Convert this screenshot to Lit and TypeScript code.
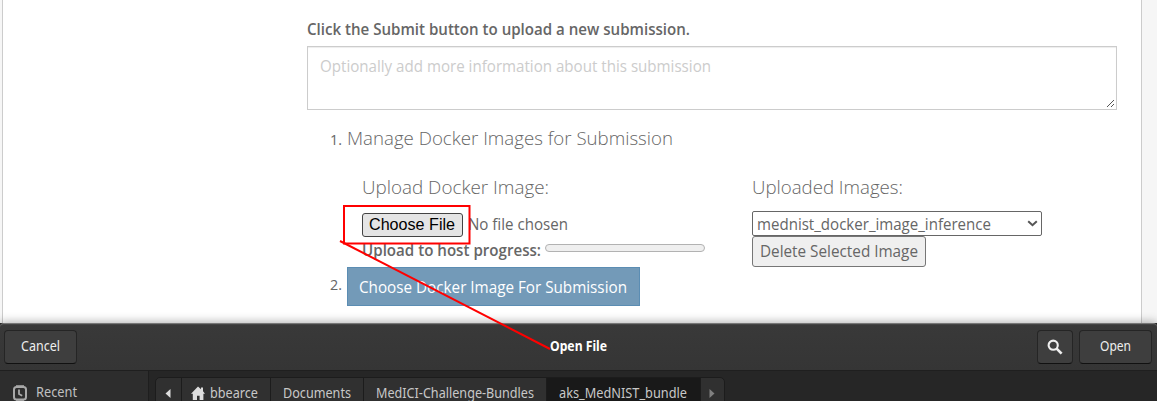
import { LitElement, html, css, svg } from 'lit';
import { customElement, property } from 'lit/decorators.js';

/** Single line of text, condensed or widened to a fixed advance width. */
@customElement('fit-text')
class FitText extends LitElement {
  @property({ type: Number }) w = 0;
  static styles = css`
    :host { display: inline-block; white-space: nowrap; flex: none; }
    span { display: inline-block; transform-origin: 0 50%; }
  `;
  render() { return html`<span><slot></slot></span>`; }
  updated() {
    const s = this.renderRoot.querySelector('span') as HTMLElement;
    this.style.width = 'auto';
    s.style.transform = 'none';
    const n = s.getBoundingClientRect().width;
    this.style.width = this.w + 'px';
    if (n) s.style.transform = `scaleX(${this.w / n})`;
  }
}

@customElement('submission-form')
class SubmissionForm extends LitElement {
  static styles = css`
    :host { display: block; height: 323px; overflow: hidden; background: #f6f6f6; font: 15.5px/20px "Open Sans", "Noto Sans", sans-serif; color: #666; }
    * { box-sizing: border-box; }
    .panel { height: 323px; margin: 0 15px 0 2px; border: solid #ccc; border-width: 0 1px; background: #fff; padding: 19px 24px 0 304px; }
    .label { height: 27px; font-weight: 600; }
    .label fit-text { vertical-align: top; }
    .area { height: 64px; border: 1px solid #ccc; box-shadow: inset 0 1px 1px rgba(0,0,0,.075); padding: 9px 12px 11px; color: #ccc; display: flex; justify-content: space-between; }
    .grip { width: 8px; height: 8px; align-self: flex-end; margin: 0 -11px -10px 0; flex: none; }
    .item { display: grid; grid-template-columns: 40px 1fr; }
    .num { padding-left: 23px; font-size: 15px; }
    .one { height: 157px; padding-top: 17px; align-items: start; }
    .light { font-weight: 300; font-size: 18.5px; line-height: 22px; }
    .cols { display: grid; grid-template-columns: 390px 1fr; padding: 27px 0 0 15px; }
    .cols .light { height: 24px; }
    .file { display: flex; align-items: center; gap: 5px; margin-top: 12px; height: 26px; }
    .file > fit-text { margin-bottom: 2px; }
    .choose { display: flex; align-items: center; justify-content: center; width: 101px; height: 24px; border: 1px solid #444; border-radius: 3px; background: #e5e5e5; color: #000; font: 16px/20px "Liberation Sans", Arial, sans-serif; padding-right: 1px; }
    .prog { display: flex; gap: 4px; height: 25px; margin-top: 3px; font-weight: 600; }
    .prog fit-text { margin-top: -1px; }
    .bar { width: 160px; height: 8px; border: 1px solid #b2b2b2; border-radius: 4px; background: #efefef; margin-top: 3px; }
    .select { display: flex; align-items: center; justify-content: space-between; width: 290px; height: 25px; margin-top: 11px; border: 1px solid #666; border-radius: 2px; padding: 0 3px 0 4px; }
    .delete { display: flex; align-items: center; justify-content: center; width: 174px; height: 31px; border: 1px solid #767676; border-radius: 3px; background: #efefef; padding: 0 1px 1px 0; }
    .blue { width: 293px; height: 39px; border: 1px solid #5b8db3; background: #739ab8; color: #fff; display: flex; align-items: center; padding: 0 0 0 11px; }
    .two .num { padding-top: 7px; }
    .one .num { padding-top: 2px; }
  `;
  render() {
    return html`<div class="panel">
      <div class="label"><fit-text w="383">Click the Submit button to upload a new submission.</fit-text></div>
      <div class="area"><fit-text w="391">Optionally add more information about this submission</fit-text>
        <svg class="grip" viewBox="0 0 8 8" shape-rendering="crispEdges">${[0, 1, 2, 3, 4, 5, 6].map(i => svg`<rect x=${i} y=${6 - i} width="1" height="1" fill="#555"/>`)}${[0, 1, 2].map(i => svg`<rect x=${4 + i} y=${6 - i} width="1" height="1" fill="#555"/>`)}</svg>
      </div>
      <div class="item one">
        <span class="num"><fit-text w="12">1.</fit-text></span>
        <div>
          <div class="light"><fit-text w="326">Manage Docker Images for Submission</fit-text></div>
          <div class="cols">
            <div>
              <div class="light"><fit-text w="187">Upload Docker Image:</fit-text></div>
              <div class="file"><span class="choose"><fit-text w="86">Choose File</fit-text></span><fit-text w="100">No file chosen</fit-text></div>
              <div class="prog"><fit-text w="179">Upload to host progress:</fit-text><span class="bar"></span></div>
            </div>
            <div>
              <div class="light"><fit-text w="151">Uploaded Images:</fit-text></div>
              <div class="select"><fit-text w="234">mednist_docker_image_inference</fit-text>
                <svg width="11" height="8" viewBox="0 0 11 8"><path d="M1.2 1.2L5.5 5.2L9.8 1.2" fill="none" stroke="#555" stroke-width="2"/></svg></div>
              <div class="delete"><fit-text w="158">Delete Selected Image</fit-text></div>
            </div>
          </div>
        </div>
      </div>
      <div class="item two">
        <span class="num"><fit-text w="12">2.</fit-text></span>
        <div class="blue"><fit-text w="268">Choose Docker Image For Submission</fit-text></div>
      </div>
    </div>`;
  }
}

@customElement('file-dialog')
class FileDialog extends LitElement {
  static styles = css`
    :host { display: block; position: relative; height: 78px; background: #262626; color: #d2d2d2; font: 13.5px/18px "Noto Sans", "Open Sans", sans-serif; box-shadow: 0 -1px 9px rgba(0,0,0,.32); }
    * { box-sizing: border-box; }
    .head { height: 48px; border-top: 1px solid #777; border-bottom: 1px solid #1f1f1f; background: linear-gradient(#393939, #353535); border-radius: 4px 4px 0 0; box-shadow: inset 0 1px 0 #444; padding: 6px 5px 0 4px; display: grid; grid-template-columns: 1fr auto 1fr; align-items: start; }
    .title { font-weight: 700; color: #fff; padding: 7px 0 0 1px; }
    .btn { width: 73px; height: 34px; border: 1px solid #252525; border-bottom-color: #111; border-radius: 4px; background: #3e3e3e; color: #eee; display: flex; align-items: center; justify-content: center; padding-bottom: 2px; }
    .right { display: flex; justify-content: flex-end; gap: 6px; }
    .search { width: 36px; padding: 0; }
    .body { display: grid; grid-template-columns: 149px 1fr; height: 30px; overflow: hidden; line-height: 14px; }
    .side { background: #2d2d2d; border-right: 1px solid #1e1e1e; padding: 14px 0 0 12px; display: flex; gap: 8px; align-items: flex-start; color: #c0c0c0; }
    .side svg { flex: none; margin-top: 0; }
    .path { display: flex; margin: 6px 0 0 6px; height: 34px; width: 570px; border: 1px solid #1c1c1c; border-radius: 5px; background: #303030; overflow: hidden; }
    .seg { height: 34px; border-right: 1px solid #1c1c1c; padding: 8px 1px 0 0; display: flex; justify-content: center; align-items: flex-start; color: #c8c8c8; flex: none; }
    .seg svg { margin-top: -1px; flex: none; }
    .seg:last-child { border: 0; }
    .on { background: #191919; }
    .a { width: 26px; padding-right: 2px; } .b { width: 89px; gap: 5px; padding-right: 3px; } .c { width: 93px; } .d { width: 183px; } .e { width: 154px; padding-right: 2px; } .f { width: 23px; }
  `;
  render() {
    return html`
      <div class="head">
        <div class="btn"><fit-text w="39">Cancel</fit-text></div>
        <div class="title"><fit-text w="57">Open File</fit-text></div>
        <div class="right">
          <div class="btn search"><svg width="16" height="16" viewBox="0 0 16 16" fill="none" stroke="#eee"><circle cx="6.2" cy="6.2" r="4.6" stroke-width="2.1"/><path d="M9.4 9.4L14.6 14.6" stroke-width="2.7"/></svg></div>
          <div class="btn"><fit-text w="31">Open</fit-text></div>
        </div>
      </div>
      <div class="body">
        <div class="side">
          <svg width="16" height="17" viewBox="0 0 16 17"><path d="M4 0h8v2H4zM4 15h8v2H4z" fill="#8e8e8e"/><rect x="2" y="2" width="12" height="12.5" rx="2.5" fill="none" stroke="#a8a8a8" stroke-width="2"/><path d="M7 4.5v4.5l3.2 1.8" fill="none" stroke="#a8a8a8" stroke-width="1.8"/></svg>
          <fit-text w="41">Recent</fit-text>
        </div>
        <div class="path">
          <div class="seg a"><svg width="6" height="16" viewBox="0 0 6 16"><path d="M5.5 4v9L0.5 8.5z" fill="#ddd"/></svg></div>
          <div class="seg b"><svg width="14" height="16" viewBox="0 0 14 16"><path d="M7 1.5L10 4.3V2.5h2v3.8L14 8.8h-1.6V15H8.6V10.8H6V15H1.8V8.8H0z" fill="#ddd"/></svg><fit-text w="48">bbearce</fit-text></div>
          <div class="seg c"><fit-text w="68">Documents</fit-text></div>
          <div class="seg d"><fit-text w="158">MedICI-Challenge-Bundles</fit-text></div>
          <div class="seg e on"><fit-text w="128">aks_MedNIST_bundle</fit-text></div>
          <div class="seg f"><svg width="6" height="16" viewBox="0 0 6 16"><path d="M0.5 4v9L5.5 8.5z" fill="#808080"/></svg></div>
        </div>
      </div>`;
  }
}

@customElement('app-root')
class AppRoot extends LitElement {
  static styles = css`
    :host { display: block; position: relative; width: 1157px; height: 401px; overflow: hidden; background: #f6f6f6; }
    .mark { position: absolute; left: 0; top: 0; pointer-events: none; }
  `;
  render() {
    return html`<submission-form></submission-form><file-dialog></file-dialog>
      <svg class="mark" width="1157" height="401" fill="none" stroke="#ff0000"><rect x="344" y="206" width="125.5" height="37.5" stroke-width="2"/><path d="M340 241L550 349" stroke-width="2"/></svg>`;
  }
}
